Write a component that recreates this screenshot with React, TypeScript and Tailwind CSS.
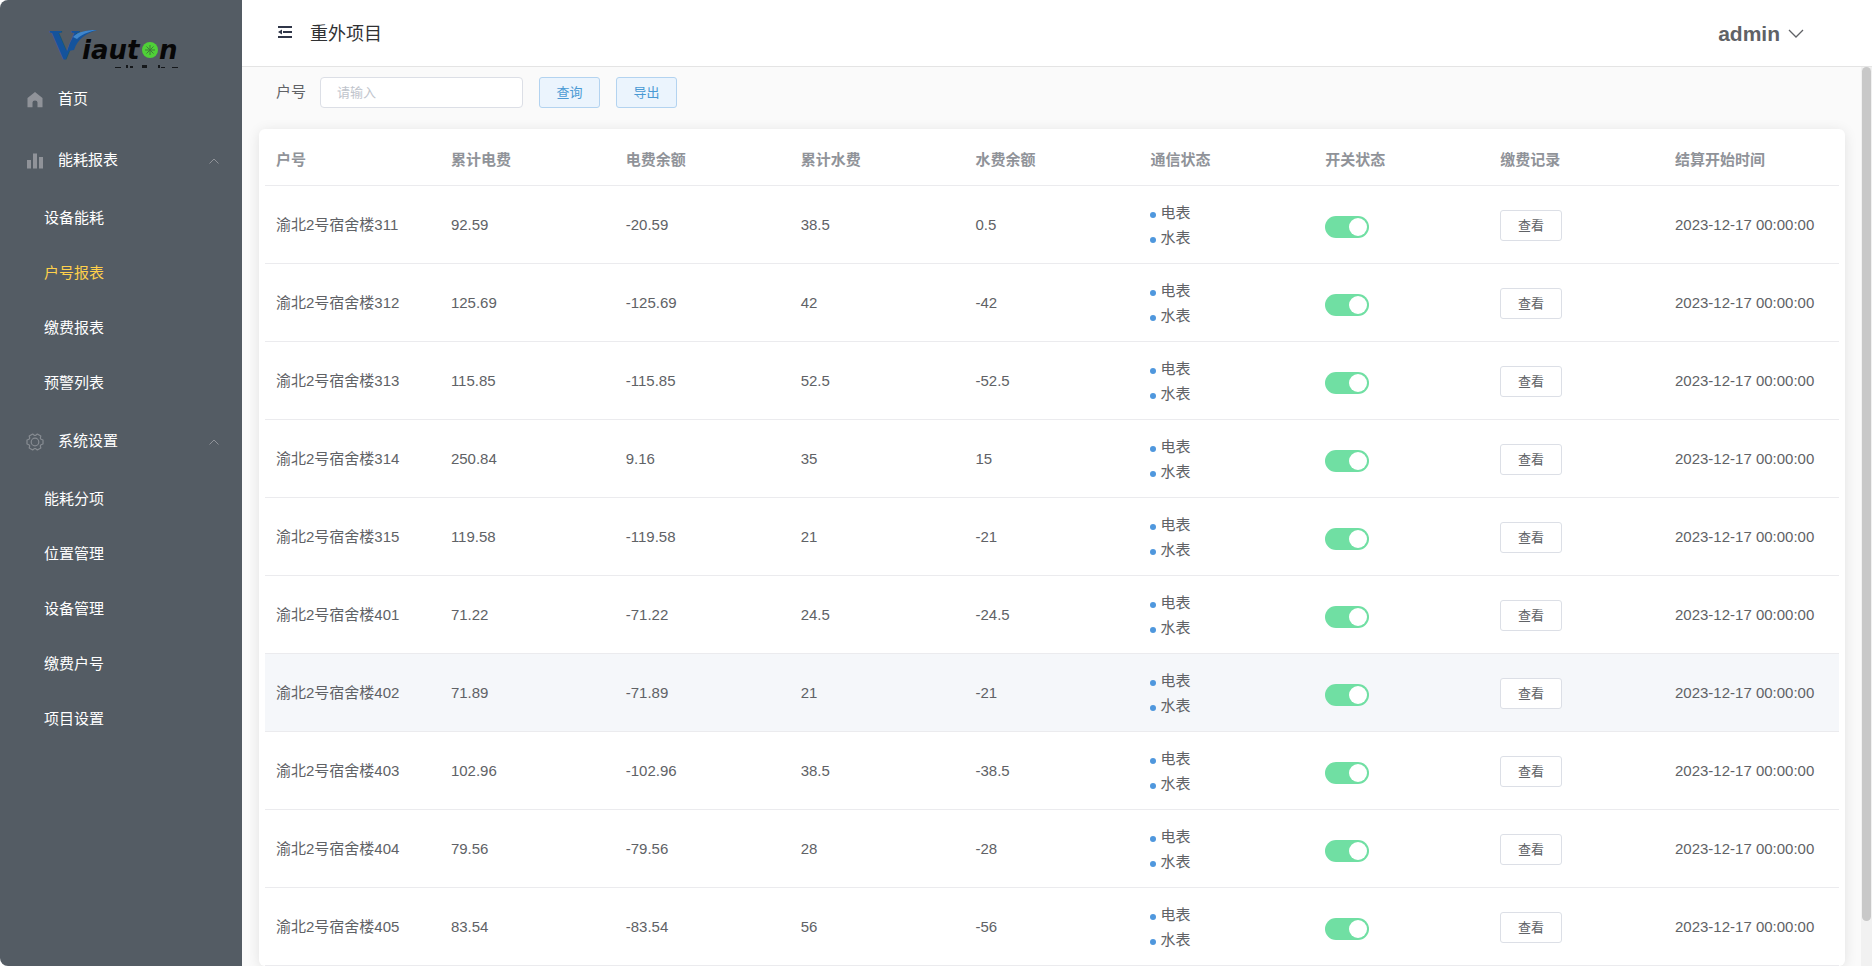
import { useState } from "react";

interface MenuGroup {
  label: string;
  icon: "bars" | "gear";
  items: string[];
}

interface Household {
  name: string;
  powerTotal: string;
  powerBalance: string;
  waterTotal: string;
  waterBalance: string;
}

const menu: MenuGroup[] = [
  {
    label: "能耗报表",
    icon: "bars",
    items: ["设备能耗", "户号报表", "缴费报表", "预警列表"],
  },
  {
    label: "系统设置",
    icon: "gear",
    items: ["能耗分项", "位置管理", "设备管理", "缴费户号", "项目设置"],
  },
];

const columns = [
  "户号",
  "累计电费",
  "电费余额",
  "累计水费",
  "水费余额",
  "通信状态",
  "开关状态",
  "缴费记录",
  "结算开始时间",
];

const rows: Household[] = [
  { name: "渝北2号宿舍楼311", powerTotal: "92.59", powerBalance: "-20.59", waterTotal: "38.5", waterBalance: "0.5" },
  { name: "渝北2号宿舍楼312", powerTotal: "125.69", powerBalance: "-125.69", waterTotal: "42", waterBalance: "-42" },
  { name: "渝北2号宿舍楼313", powerTotal: "115.85", powerBalance: "-115.85", waterTotal: "52.5", waterBalance: "-52.5" },
  { name: "渝北2号宿舍楼314", powerTotal: "250.84", powerBalance: "9.16", waterTotal: "35", waterBalance: "15" },
  { name: "渝北2号宿舍楼315", powerTotal: "119.58", powerBalance: "-119.58", waterTotal: "21", waterBalance: "-21" },
  { name: "渝北2号宿舍楼401", powerTotal: "71.22", powerBalance: "-71.22", waterTotal: "24.5", waterBalance: "-24.5" },
  { name: "渝北2号宿舍楼402", powerTotal: "71.89", powerBalance: "-71.89", waterTotal: "21", waterBalance: "-21" },
  { name: "渝北2号宿舍楼403", powerTotal: "102.96", powerBalance: "-102.96", waterTotal: "38.5", waterBalance: "-38.5" },
  { name: "渝北2号宿舍楼404", powerTotal: "79.56", powerBalance: "-79.56", waterTotal: "28", waterBalance: "-28" },
  { name: "渝北2号宿舍楼405", powerTotal: "83.54", powerBalance: "-83.54", waterTotal: "56", waterBalance: "-56" },
];

function Logo() {
  return (
    <svg viewBox="0 0 140 56" className="h-14 w-[140px]" role="img" aria-label="Viauton">
      <text x="4" y="46" fontFamily="Liberation Serif, serif" fontWeight="700" fontSize="43" fill="#14539c">
        V
      </text>
      <path d="M23 38C25 24 34 17 52 17C42 20 33 25 29 37Z" fill="#14539c" />
      <path d="M28 24C33 19 40 17 52 17C42 19 36 22 32 26Z" fill="#3f86cc" />
      <text x="37" y="46" fontFamily="DejaVu Sans, sans-serif" fontWeight="700" fontStyle="italic" fontSize="26" fill="#070707">
        iaut
      </text>
      <circle cx="105" cy="37" r="8" fill="#4fd037" />
      <path d="M105 32v10M100 37h10M101.500 33.500l7 7M108.500 33.500l-7 7" stroke="#3f7a3a" strokeWidth="1" />
      <text x="114" y="46" fontFamily="DejaVu Sans, sans-serif" fontWeight="700" fontStyle="italic" fontSize="26" fill="#070707">
        n
      </text>
      {/* Tops of the second line, clipped by the header */}
      <path d="M70 54h6v1h-6zM81 52h2v3h-2zM85 53h3v2h-3zM97 52h5v3h-5zM113 52h2v3h-2zM116 54h4v1h-4zM127 54h6v1h-6z" fill="#15181b" />
    </svg>
  );
}

function MenuIcon({ icon }: { icon: "home" | MenuGroup["icon"] }) {
  if (icon === "home") {
    return (
      <svg viewBox="0 0 16 16" className="ml-px size-4 fill-[#909399]">
        <path d="M8 0l7.500 6v9.200H10.500V10.500a2.500 2 0 0 0-5 0v4.700H.5V6z" />
      </svg>
    );
  }
  if (icon === "bars") {
    return (
      <svg viewBox="0 0 16 16" className="ml-px size-4 fill-[#909399]">
        <path d="M0 7h4v8.500H0zM6 .5h4v15H6zM12 4h4v11.500h-4z" />
      </svg>
    );
  }
  return (
    <svg viewBox="0 0 18 18" className="size-[18px]" fill="none" stroke="#878c92" strokeWidth="1.200" strokeLinejoin="round">
      <path d="M15 6.300 17 7v4l-2 .7-.7 1.200.5 2.100-3.500 2-1.600-1.400H8.300L6.700 17l-3.500-2 .5-2.100-.7-1.200L1 11V7l2-.7.7-1.200L3.200 3l3.500-2 1.600 1.400h1.400L11.300 1l3.500 2-.5 2.100z" />
      <circle cx="9" cy="9" r="3.800" />
    </svg>
  );
}

function Sidebar() {
  const [opened, setOpened] = useState<string[]>(menu.map((group) => group.label));

  const toggle = (label: string) =>
    setOpened((prev) =>
      prev.includes(label) ? prev.filter((ele) => ele !== label) : [...prev, label],
    );

  return (
    <aside className="w-[242px] shrink-0 rounded-l-lg bg-[#545c64] text-[15px] text-white">
      <div className="flex h-[69px] items-end justify-center pr-3">
        <Logo />
      </div>
      <nav>
        <a href="#home" className="flex h-[61px] items-center pl-[26px]">
          <span className="flex w-8 items-center">
            <MenuIcon icon="home" />
          </span>
          首页
        </a>
        {menu.map((group) => (
          <div key={group.label}>
            <button
              type="button"
              aria-expanded={opened.includes(group.label)}
              onClick={() => toggle(group.label)}
              className="flex h-[61px] w-full items-center pr-[23px] pl-[26px]"
            >
              <span className="flex w-8 items-center">
                <MenuIcon icon={group.icon} />
              </span>
              {group.label}
              <svg viewBox="0 0 10 6" className="ml-auto h-1.5 w-2.5" fill="none" stroke="#909399">
                <path d="M0.500 5.500 5 1l4.500 4.500" />
              </svg>
            </button>
            {opened.includes(group.label) &&
              group.items.map((item) => (
                <a
                  key={item}
                  href="#"
                  className={
                    item === "户号报表"
                      ? "flex h-[55px] items-center pl-11 text-[#ffd04b]"
                      : "flex h-[55px] items-center pl-11"
                  }
                >
                  {item}
                </a>
              ))}
          </div>
        ))}
      </nav>
    </aside>
  );
}

function Header() {
  return (
    <header className="flex h-[67px] shrink-0 items-center border-b border-[#e4e4e4] bg-white pt-0.5 pr-[68px] pl-9">
      <button type="button" aria-label="收起菜单">
        <svg viewBox="0 0 14 12" className="mb-1 h-3 w-3.5 fill-[#303648]">
          <path d="M0 0h14v2H0zM5 5h9v2H5zM0 10h14v2H0zM0 6l4-2.500v5z" />
        </svg>
      </button>
      <h1 className="ml-[18px] text-lg text-[#303133]">重外项目</h1>
      <button type="button" className="ml-auto flex items-center gap-2 text-[21px] font-bold text-[#606266]">
        admin
        <svg viewBox="0 0 16 10" className="h-2.5 w-4" fill="none" stroke="currentColor" strokeWidth="1.300">
          <path d="m1 1 7 7 7-7" />
        </svg>
      </button>
    </header>
  );
}

function SearchBar() {
  const [keyword, setKeyword] = useState("");

  return (
    <form
      className="flex items-center gap-4 pt-2.5 pl-[34px]"
      onSubmit={(e) => e.preventDefault()}
    >
      <div className="flex items-center gap-3.5">
        <label htmlFor="household" className="text-[15px] text-[#606266]">
          户号
        </label>
        <input
          id="household"
          value={keyword}
          onChange={(e) => setKeyword(e.target.value)}
          placeholder="请输入"
          className="h-[31px] w-[203px] rounded border border-[#dcdfe6] bg-white px-4 text-[13px] placeholder:text-[#c0c4cc]"
        />
      </div>
      <button
        type="submit"
        className="h-[31px] w-[61px] rounded-[3px] border border-[#b3d3f0] bg-[#ebf4fd] text-[13px] text-[#4a9ad4]"
      >
        查询
      </button>
      <button
        type="button"
        className="h-[31px] w-[61px] rounded-[3px] border border-[#b3d3f0] bg-[#ebf4fd] text-[13px] text-[#4a9ad4]"
      >
        导出
      </button>
    </form>
  );
}

function StatusDot({ label }: { label: string }) {
  return (
    <li className="flex h-[25px] items-center gap-1">
      <span className="mt-1 size-1.5 rounded-full bg-[#4f97dd]" />
      {label}
    </li>
  );
}

function HouseholdTable() {
  return (
    <div className="mt-[21px] mr-4 ml-[17px] rounded-md bg-white px-1.5 pt-1 shadow-[0_2px_13px_rgba(0,0,0,0.1)]">
      <table className="w-full table-fixed border-separate border-spacing-0 text-left text-[15px] text-[#606266]">
        <thead>
          <tr>
            {columns.map((column) => (
              <th
                key={column}
                scope="col"
                className="h-[53px] border-b border-[#ebebee] pt-0.5 pl-[11px] font-bold text-[#909399]"
              >
                {column}
              </th>
            ))}
          </tr>
        </thead>
        <tbody className="[&_td]:h-[78px] [&_td]:border-b [&_td]:border-[#ebebee] [&_td]:pt-0.5 [&_td]:pl-[11px] [&_td]:whitespace-nowrap">
          {rows.map((row) => (
            <tr
              key={row.name}
              className={row.name.endsWith("402") ? "bg-[#f5f7fa]" : "hover:bg-[#f5f7fa]"}
            >
              <td>{row.name}</td>
              <td>{row.powerTotal}</td>
              <td>{row.powerBalance}</td>
              <td>{row.waterTotal}</td>
              <td>{row.waterBalance}</td>
              <td>
                <ul>
                  <StatusDot label="电表" />
                  <StatusDot label="水表" />
                </ul>
              </td>
              <td>
                <label className="mt-0.5 flex w-11">
                  <input
                    type="checkbox"
                    role="switch"
                    defaultChecked
                    aria-label={`${row.name} 开关状态`}
                    className="peer sr-only"
                  />
                  <span className="flex h-[22px] w-11 items-center rounded-full bg-[#dcdfe6] px-0.5 peer-checked:justify-end peer-checked:bg-[#70dfa3]">
                    <span className="size-[18px] rounded-full bg-white" />
                  </span>
                </label>
              </td>
              <td>
                <button
                  type="button"
                  className="h-[31px] w-[62px] rounded-[3px] border border-[#dcdfe6] bg-white text-[13px]"
                >
                  查看
                </button>
              </td>
              <td>2023-12-17 00:00:00</td>
            </tr>
          ))}
        </tbody>
      </table>
    </div>
  );
}

export default function App() {
  return (
    <div className="flex h-screen overflow-hidden bg-white font-['Liberation_Sans','Noto_Sans_CJK_SC',sans-serif]">
      <Sidebar />
      <div className="flex min-w-0 flex-1 flex-col">
        <Header />
        <div className="flex min-h-0 flex-1 bg-[#fafafa]">
          <main className="min-w-0 flex-1 overflow-hidden">
            <SearchBar />
            <HouseholdTable />
          </main>
          {/* Scroll track */}
          <div className="w-[11px] bg-[#f1f1f1]">
            <div className="mx-px h-[95%] rounded-full bg-[#c8c8c8]" />
          </div>
        </div>
      </div>
    </div>
  );
}
